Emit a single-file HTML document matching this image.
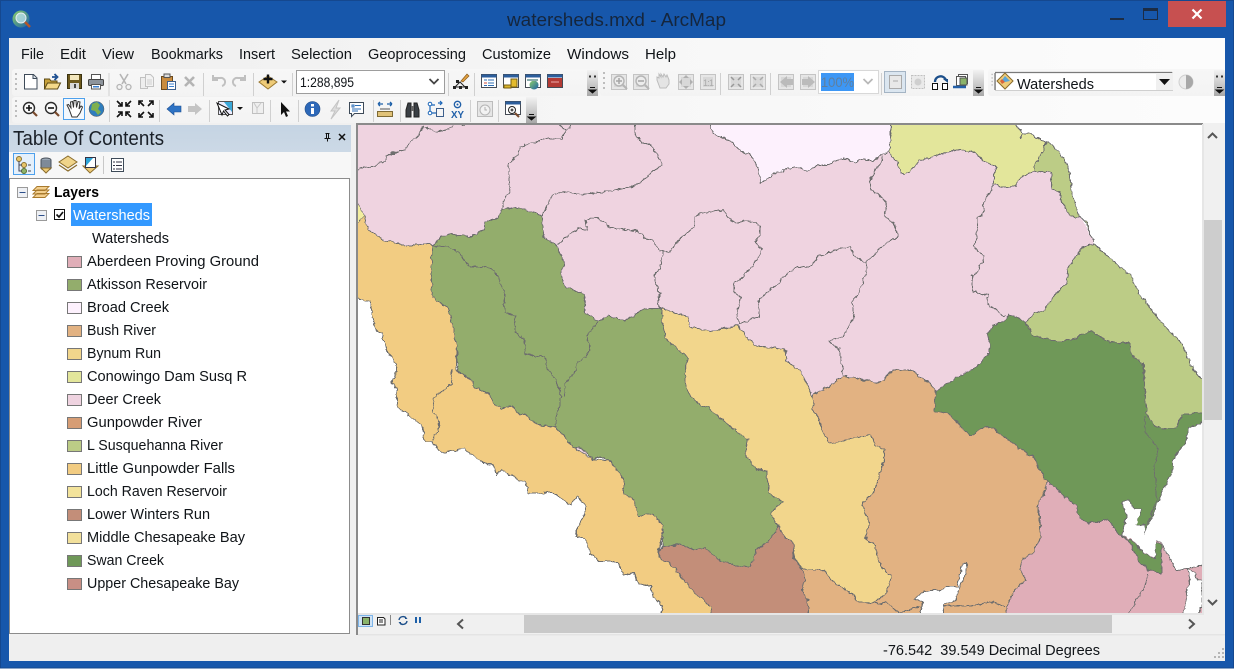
<!DOCTYPE html>
<html><head><meta charset="utf-8"><title>watersheds.mxd - ArcMap</title>
<style>
html,body{margin:0;padding:0;background:#fff;width:1234px;height:669px;overflow:hidden}
svg{display:block}
text{font-family:"Liberation Sans",sans-serif;fill:#101418}
.m{font-size:15px}
.l{font-size:14.5px}
.map polygon{stroke:#6e6e6e;stroke-width:3;stroke-linejoin:round}
.map polyline{stroke:#6e6e6e;stroke-width:3;fill:none;stroke-linejoin:round}
</style></head><body>
<svg width="1234" height="669" viewBox="0 0 1234 669" xmlns="http://www.w3.org/2000/svg">
<defs>
<linearGradient id="mb" x1="0" x2="1" y1="0" y2="0"><stop offset="0" stop-color="#eeeeee"/><stop offset=".6" stop-color="#f8f8f8"/><stop offset="1" stop-color="#fcfcfc"/></linearGradient>
<linearGradient id="tb" x1="0" x2="0" y1="0" y2="1"><stop offset="0" stop-color="#f7f7f7"/><stop offset="1" stop-color="#f3f3f3"/></linearGradient>
<linearGradient id="ch" x1="0" x2="0" y1="0" y2="1"><stop offset="0" stop-color="#f2f2f2"/><stop offset="1" stop-color="#a8a8a8"/></linearGradient>
<linearGradient id="gl" x1="0" x2="1" y1="0" y2="1"><stop offset="0" stop-color="#8ccf6a"/><stop offset="1" stop-color="#1a5fa8"/></linearGradient>
<linearGradient id="ti" x1="0" x2="0" y1="0" y2="1"><stop offset="0" stop-color="#c5d4e3"/><stop offset="1" stop-color="#ccd9e6"/></linearGradient>
<clipPath id="mc"><rect x="8" y="12" width="2533" height="1467"/></clipPath>
<filter id="rough" filterUnits="userSpaceOnUse" x="-40" y="-40" width="2700" height="1600" color-interpolation-filters="sRGB">
<feTurbulence type="fractalNoise" baseFrequency="0.06" numOctaves="2" seed="4" result="n"/>
<feDisplacementMap in="SourceGraphic" in2="n" scale="14" xChannelSelector="R" yChannelSelector="G"/>
</filter>
<symbol id="chev" width="11" height="26" viewBox="0 0 11 26"><rect width="11" height="26" fill="url(#ch)"/><path d="M3 17.500h5M2 20h7l-3.500 3z" stroke="#111" fill="#111" stroke-width="1"/></symbol>
<symbol id="grip" width="3" height="20" viewBox="0 0 3 20"><path d="M0 1h2v2H0zM0 6h2v2H0zM0 11h2v2H0zM0 16h2v2H0z" fill="#bdbdbd"/></symbol>
<symbol id="win" width="16" height="14" viewBox="0 0 16 14"><rect x=".5" y=".5" width="15" height="13" fill="#fff" stroke="#454b55"/><rect x=".5" y=".5" width="15" height="3" fill="#2c5e9c"/></symbol>
<symbol id="gi" width="16" height="16" viewBox="0 0 16 16"><rect x=".5" y=".5" width="15" height="15" fill="#e6e6e6" stroke="#c4c4c4"/><rect x="3" y="3" width="10" height="10" fill="#d8d8d8"/></symbol>
</defs>

<!-- window frame -->
<rect x="0" y="0" width="1234" height="668" fill="#1757ab"/>
<rect x=".5" y=".5" width="1233" height="667.500" fill="none" stroke="#15488f"/>
<rect x="9" y="38" width="1216" height="623" fill="#f0f0f0"/>

<!-- title bar -->
<circle cx="21" cy="19" r="8.500" fill="url(#gl)"/>
<circle cx="21" cy="18" r="5" fill="#bfe3ee" fill-opacity=".75" stroke="#e8eef0"/>
<path d="M25 22l5 5" stroke="#b4562a" stroke-width="2.500"/>
<text x="507" y="26" font-size="18" textLength="219" lengthAdjust="spacingAndGlyphs" style="fill:#15263d">watersheds.mxd - ArcMap</text>
<rect x="1110" y="18" width="14" height="2" fill="#1c2c44"/>
<rect x="1143.500" y="8.500" width="14" height="11" fill="none" stroke="#1c2c44"/><rect x="1143" y="8" width="15" height="3" fill="#1c2c44"/>
<rect x="1168" y="1" width="58" height="26" fill="#c75050"/>
<path d="M1192.500 9.500l9 9m0-9l-9 9" stroke="#fff" stroke-width="2.200"/>

<!-- menu bar -->
<rect x="9" y="38" width="1216" height="85" fill="url(#mb)"/>
<text class="m" x="21" y="59" textLength="23" lengthAdjust="spacingAndGlyphs">File</text>
<text class="m" x="60" y="59" textLength="26" lengthAdjust="spacingAndGlyphs">Edit</text>
<text class="m" x="102" y="59" textLength="32" lengthAdjust="spacingAndGlyphs">View</text>
<text class="m" x="151" y="59" textLength="72" lengthAdjust="spacingAndGlyphs">Bookmarks</text>
<text class="m" x="239" y="59" textLength="36" lengthAdjust="spacingAndGlyphs">Insert</text>
<text class="m" x="291" y="59" textLength="61" lengthAdjust="spacingAndGlyphs">Selection</text>
<text class="m" x="368" y="59" textLength="98" lengthAdjust="spacingAndGlyphs">Geoprocessing</text>
<text class="m" x="482" y="59" textLength="69" lengthAdjust="spacingAndGlyphs">Customize</text>
<text class="m" x="567" y="59" textLength="62" lengthAdjust="spacingAndGlyphs">Windows</text>
<text class="m" x="645" y="59" textLength="31" lengthAdjust="spacingAndGlyphs">Help</text>

<!-- toolbar strips -->
<rect x="12" y="69" width="585" height="27" rx="3" fill="url(#tb)"/>
<rect x="600" y="69" width="384" height="27" rx="3" fill="url(#tb)"/>
<rect x="988" y="69" width="237" height="27" rx="3" fill="url(#tb)"/>
<rect x="12" y="97" width="525" height="26" rx="3" fill="url(#tb)"/>
<use href="#grip" x="15" y="72"/><use href="#grip" x="15" y="99"/><use href="#grip" x="603" y="71"/><use href="#grip" x="991" y="73" height="14"/>

<!-- row 1 icons -->
<path d="M24.500 74.500h9l3.500 3.500v11h-12.500z" fill="#fff" stroke="#3d4a58"/><path d="M33 75v3.500h4" fill="#dfe6ee" stroke="#3d4a58"/>
<path d="M44.500 89v-10h5l1.500 2h6v8z" fill="#c8a23a" stroke="#5c4a16"/><path d="M44.500 89l3-6h13l-3 6z" fill="#f4d98a" stroke="#5c4a16"/><path d="M52 77h4m-1.500-3l3 3-3 3" stroke="#1d4f91" stroke-width="1.800" fill="none"/>
<rect x="67.500" y="74.500" width="14" height="14" fill="#6e5a1e" stroke="#3a3210"/><rect x="70" y="75" width="9" height="5" fill="#f3e7bd"/><rect x="70" y="83" width="9" height="6" fill="#d8d8d8"/><rect x="74" y="84" width="2" height="4" fill="#444"/>
<rect x="91.500" y="74.500" width="9" height="5" fill="#fff" stroke="#555"/><rect x="88.500" y="79.500" width="15" height="6" rx="1" fill="#8d949c" stroke="#444"/><rect x="91.500" y="84.500" width="9" height="4.500" fill="#fff" stroke="#555"/><rect x="93" y="86" width="6" height="1.500" fill="#3a7fd0"/>
<rect x="108.500" y="73" width="1" height="23" fill="#d0d0d0"/>
<path d="M120 74l6 10m2-10l-6 10" stroke="#b5b5b5" stroke-width="1.600"/><circle cx="119.500" cy="87" r="2.500" fill="none" stroke="#b5b5b5" stroke-width="1.300"/><circle cx="128.500" cy="87" r="2.500" fill="none" stroke="#b5b5b5" stroke-width="1.300"/>
<path d="M140.500 77.500h7v11h-7z" fill="#eee" stroke="#c2c2c2"/><path d="M145.500 74.500h5l3 3v9h-8z" fill="#f3f3f3" stroke="#c2c2c2"/><path d="M147 80h5m-5 2h5m-5 2h5" stroke="#cfcfcf"/>
<rect x="161.500" y="76.500" width="11" height="13" fill="#c98c3f" stroke="#6b4a1e"/><rect x="164" y="74" width="6" height="3.500" fill="#ddd" stroke="#555"/><rect x="167.500" y="81.500" width="8" height="8" fill="#fff" stroke="#3d5f8c"/><path d="M169 84h5m-5 2.500h5" stroke="#3a7fd0"/>
<path d="M185 77l9 9m0-9l-9 9" stroke="#b4b4b4" stroke-width="2.600"/>
<rect x="203" y="73" width="1" height="23" fill="#d0d0d0"/>
<path d="M214 78h6a4 4 0 0 1 2 8M213 75v5h5" fill="none" stroke="#c0c0c0" stroke-width="2"/>
<path d="M244 78h-6a4 4 0 0 0-2 8M245 75v5h-5" fill="none" stroke="#c0c0c0" stroke-width="2"/>
<rect x="253" y="73" width="1" height="23" fill="#d0d0d0"/>
<path d="M268 76l9 6-9 7-9-7z" fill="#eecb78" stroke="#9b7a32"/><path d="M268 74.500v9M263.500 79h9" stroke="#111" stroke-width="2.400"/>
<path d="M281 80.500h6l-3 3z" fill="#111"/>
<rect x="292" y="73" width="1" height="23" fill="#d0d0d0"/>
<rect x="296.500" y="70.500" width="148" height="23" fill="#fff" stroke="#9d9d9d"/>
<text x="300" y="87" font-size="14" textLength="54" lengthAdjust="spacingAndGlyphs">1:288,895</text>
<path d="M429.500 79l4.500 4.500 4.500-4.500" fill="none" stroke="#444" stroke-width="1.800"/>
<rect x="448" y="73" width="1" height="23" fill="#d0d0d0"/>
<path d="M455 87l5-5 5 5-10 0" fill="none" stroke="#222"/><rect x="453" y="86" width="3" height="3" fill="#222"/><rect x="459" y="86" width="3" height="3" fill="#222"/><rect x="465" y="86" width="3" height="3" fill="#222"/><rect x="456" y="80" width="3" height="3" fill="#222"/>
<path d="M461 81l6-7 2 2-6 6z" fill="#e0a040" stroke="#8a5a1c" stroke-width=".7"/>
<rect x="474" y="73" width="1" height="23" fill="#d0d0d0"/>
<use href="#win" x="481" y="74"/><path d="M484 80h3m1 0h6M484 83h3m1 0h6M484 85.500h3m1 0h6" stroke="#2f6fb5"/><path d="M484 83h3" stroke="#d04a3a"/>
<use href="#win" x="503" y="74"/><path d="M511 79h6v8h-6z" fill="#e3bb2e" stroke="#7a6010"/><path d="M504 85h7v3h-7z" fill="#d9b52c" stroke="#7a6010"/>
<use href="#win" x="525" y="74"/><circle cx="534" cy="85" r="4.500" fill="url(#gl)"/><rect x="527" y="79" width="11" height="2" fill="#8aa"/>
<use href="#win" x="547" y="74"/><rect x="548" y="78" width="14" height="9" fill="#b33a34"/><path d="M551 82h8" stroke="#eaa"/>
<use href="#chev" x="587" y="70"/><path d="M589 75.500h2v2h-2zM594 75.500h2v2h-2z" fill="#333"/>

<!-- grey toolbar -->
<use href="#gi" x="611" y="74"/><circle cx="619" cy="81" r="5" fill="#ececec" stroke="#b5b5b5" stroke-width="1.400"/><path d="M616 81h6M619 78v6" stroke="#a5a5a5" stroke-width="1.500"/><path d="M623 85l4 4" stroke="#b5b5b5" stroke-width="2"/>
<use href="#gi" x="633" y="74"/><circle cx="641" cy="81" r="5" fill="#ececec" stroke="#b5b5b5" stroke-width="1.400"/><path d="M638 81h6" stroke="#a5a5a5" stroke-width="1.500"/><path d="M645 85l4 4" stroke="#b5b5b5" stroke-width="2"/>
<path d="M657 80v-3l2 1v-4l2 3v-3l2 3 1-3 2 3 1-2 2 5v4l-3 4h-6z" fill="#e4e4e4" stroke="#bcbcbc"/>
<use href="#gi" x="678" y="74"/><path d="M686 75l-3 3h6zM686 89l-3-3h6zM679 82l3-3v6zM693 82l-3-3v6z" fill="#b0b0b0"/>
<use href="#gi" x="700" y="74"/><text x="703" y="86" font-size="9" textLength="11" style="fill:#aaa">1:1</text>
<rect x="720" y="73" width="1" height="22" fill="#d0d0d0"/>
<use href="#gi" x="728" y="74"/><path d="M731 77l3 3m7-3l-3 3m-7 7l3-3m7 3l-3-3" stroke="#999" stroke-width="1.500"/>
<use href="#gi" x="750" y="74"/><path d="M753 77l3 3m7-3l-3 3m-7 7l3-3m7 3l-3-3" stroke="#aaa" stroke-width="1.500"/>
<rect x="770" y="73" width="1" height="22" fill="#d0d0d0"/>
<use href="#gi" x="778" y="74"/><path d="M780 82l7-6v3h6v6h-6v3z" fill="#bbb"/>
<use href="#gi" x="800" y="74"/><path d="M815 82l-7-6v3h-6v6h6v3z" fill="#bbb"/>
<rect x="818.500" y="70.500" width="60" height="23" fill="#fff" stroke="#d8d8d8"/>
<rect x="821" y="73" width="33" height="18" fill="#3d97f5"/>
<text x="821" y="87" font-size="14" textLength="33" lengthAdjust="spacingAndGlyphs" style="fill:#5f7f9f">100%</text>
<path d="M863.500 79l4.500 4.500 4.500-4.500" fill="none" stroke="#b8b8b8" stroke-width="1.800"/>
<rect x="881" y="73" width="1" height="22" fill="#d0d0d0"/>
<rect x="884.500" y="71.500" width="21" height="21" fill="#dbe6f0" stroke="#a4b4c4"/>
<rect x="889.500" y="75.500" width="12" height="13" fill="#e8e8e8" stroke="#aaa"/><path d="M893 81h5" stroke="#aaa"/>
<rect x="911.500" y="75.500" width="13" height="13" fill="#eaeaea" stroke="#c0c0c0" stroke-dasharray="2 1"/><circle cx="918" cy="82" r="3.500" fill="#cfcfcf"/>
<rect x="932.500" y="83.500" width="5" height="6" fill="#fff" stroke="#111"/><rect x="942.500" y="83.500" width="5" height="6" fill="#fff" stroke="#111"/><path d="M935 82c0-6 8-8 11-2" fill="none" stroke="#1c4f8a" stroke-width="2.400"/><path d="M943 79h5v4z" fill="#1c4f8a"/>
<rect x="958.500" y="74.500" width="9" height="9" fill="#fff" stroke="#555"/><rect x="956.500" y="76.500" width="9" height="9" fill="#fff" stroke="#555"/><rect x="960" y="78" width="7" height="7" fill="#8ab36a" stroke="#555"/><path d="M953 87h13" stroke="#2460a8" stroke-width="2.500"/>
<use href="#chev" x="973" y="70"/>

<!-- layer combo -->
<rect x="995.500" y="72.500" width="177" height="18" fill="#fff" stroke="#cfcfcf"/><path d="M995 73v17M995 72.500h177" stroke="#7a7a7a" stroke-width="1.300"/>
<rect x="1156" y="73" width="17" height="17" fill="#f0f0f0"/><path d="M1159 79h11l-5.500 6z" fill="#111"/>
<path d="M1005 73l8 8-8 8-8-8z" fill="#eecb78" stroke="#8a6c2c"/><path d="M1005 76l5 5-5 1-3-2z" fill="#58a6da"/><path d="M1002 79l3 3-3 2-2-3z" fill="#d8643c"/>
<text x="1017" y="89" font-size="15" textLength="77" lengthAdjust="spacingAndGlyphs">Watersheds</text>
<circle cx="1186" cy="82" r="7" fill="#ececec" stroke="#cfcfcf"/><path d="M1186 75a7 7 0 0 1 0 14z" fill="#a8a8a8"/>
<use href="#chev" x="1214" y="70"/><path d="M1216 75.500h2v2h-2zM1221 75.500h2v2h-2z" fill="#333"/>

<!-- row 2 icons -->
<circle cx="29" cy="108" r="5.500" fill="#fafafa" stroke="#2b2b2b" stroke-width="1.400"/><path d="M26 108h6M29 105v6" stroke="#111" stroke-width="1.600"/><path d="M33 112l4 4" stroke="#7a4a2c" stroke-width="2.200"/>
<circle cx="51" cy="108" r="5.500" fill="#fafafa" stroke="#2b2b2b" stroke-width="1.400"/><path d="M48 108h6" stroke="#111" stroke-width="1.600"/><path d="M55 112l4 4" stroke="#7a4a2c" stroke-width="2.200"/>
<rect x="63.500" y="98.500" width="21" height="21" fill="#f3f8fd" stroke="#4da0ec"/>
<path d="M69 109l-2-4 1.500-.5 2.500 3.500-.5-6 2-.5 1 6 .5-7 2 0 .5 7 1.500-6 2 .5-1 7 2-3 1.500 1-2.500 6-3 4h-5z" fill="#fff" stroke="#333" stroke-width="1"/>
<circle cx="96.500" cy="109" r="7.500" fill="#2f7dbd"/><path d="M92 104l5-2 3 3-2 4 3 3-3 3-3-4-4-1z" fill="#7fb04f"/><circle cx="96.500" cy="109" r="7.500" fill="none" stroke="#555" stroke-width=".5"/>
<rect x="109" y="100" width="1" height="22" fill="#d0d0d0"/>
<path d="M117 101l5 5m0-4v4h-4M131 101l-5 5m0-4v4h4M117 117l5-5m0 4v-4h-4M131 117l-5-5m0 4v-4h4" stroke="#111" stroke-width="1.600" fill="none"/>
<path d="M144 106l-5-5m0 4v-4h4M148 106l5-5m0 4v-4h-4M144 112l-5 5m0-4v4h4M148 112l5 5m0-4v4h-4" stroke="#111" stroke-width="1.600" fill="none"/>
<rect x="159" y="100" width="1" height="22" fill="#d0d0d0"/>
<path d="M167 109l7-6v3h7v6h-7v3z" fill="#2e73c4" stroke="#1d4f91" stroke-width=".6"/>
<path d="M202 109l-7-6v3h-7v6h7v3z" fill="#c4c4c4"/>
<rect x="209" y="100" width="1" height="22" fill="#d0d0d0"/>
<rect x="218.500" y="101.500" width="14" height="13" fill="#eef" stroke="#555"/><path d="M224 102h8v10z" fill="#3aa8d8"/><path d="M217 103l5 12 1.500-4 4 5 1.500-1.500-4-4.500 4-1z" fill="#fff" stroke="#111"/>
<path d="M237 107h6l-3 3z" fill="#111"/>
<rect x="252.500" y="102.500" width="11" height="11" fill="#efefef" stroke="#c0c0c0"/><path d="M254 103l3 5 4-5M257 108v5" stroke="#c8c8c8" fill="none"/>
<rect x="270" y="100" width="1" height="22" fill="#d0d0d0"/>
<path d="M281 102l0 13 3-3 2 5 2-1-2-4.500h4z" fill="#111"/>
<rect x="298" y="100" width="1" height="22" fill="#d0d0d0"/>
<circle cx="312.500" cy="109" r="7.500" fill="#2d68b8" stroke="#204c88" stroke-width=".6"/><rect x="311" y="108" width="3" height="6" fill="#fff"/><rect x="311" y="104" width="3" height="2.500" fill="#fff"/>
<path d="M339 100l-8 11h4l-4 8 9-11h-4z" fill="#ddd" stroke="#c4c4c4"/>
<path d="M349.500 102.500h14v11h-9l-3 3v-3h-2z" fill="#fff" stroke="#3d4a58"/><path d="M352 105h2v2h-2zM355 105.500h6M352 109h9M352 111h6" stroke="#2c6db5" fill="none"/>
<rect x="373" y="100" width="1" height="22" fill="#d0d0d0"/>
<rect x="377.500" y="111.500" width="15" height="5" fill="#e0c278" stroke="#7e6a34"/><path d="M378 104h5m-5 0l2-2m-2 2l2 2M392 104h-5m5 0l-2-2m2 2l-2 2" stroke="#1c5fa8" stroke-width="1.300" fill="none"/><path d="M380 109h10" stroke="#555"/>
<rect x="400" y="100" width="1" height="22" fill="#d0d0d0"/>
<path d="M406 117v-7l2-7h3v14zM414 117v-14h3l2 7v7z" fill="#3a3f44" stroke="#222"/><rect x="411" y="106" width="3" height="5" fill="#666"/>
<rect x="436.500" y="108.500" width="7" height="8" fill="#f5f5f5" stroke="#3d5f8c"/><path d="M430 103v10h6M430 105h5M438 103h4m-2-2l2 2-2 2" stroke="#1c66b8" fill="none" stroke-width="1.200"/><circle cx="430" cy="104" r="1.800" fill="#fff" stroke="#1c66b8"/><circle cx="430" cy="113" r="1.800" fill="#fff" stroke="#1c66b8"/>
<circle cx="457.500" cy="104.500" r="3.200" fill="none" stroke="#1f5fa8" stroke-width="1.300"/><circle cx="457.500" cy="104.500" r="1" fill="#1f5fa8"/>
<text x="451" y="118" font-size="10" font-weight="bold" textLength="13" lengthAdjust="spacingAndGlyphs" style="fill:#1f5fa8">XY</text>
<rect x="470" y="100" width="1" height="22" fill="#d0d0d0"/>
<rect x="477.500" y="101.500" width="15" height="15" fill="#e6e6e6" stroke="#bcbcbc"/><circle cx="485" cy="110" r="5" fill="#f2f2f2" stroke="#b5b5b5"/><path d="M485 107v3h2" stroke="#b0b0b0" fill="none"/>
<rect x="498" y="100" width="1" height="22" fill="#d0d0d0"/>
<use href="#win" x="505" y="101"/><circle cx="512" cy="110" r="3.500" fill="#fff" stroke="#222"/><path d="M510.500 110h3M512 108.500v3" stroke="#111"/><path d="M515 113l4 4" stroke="#7a4a2c" stroke-width="2"/>
<use href="#chev" x="526" y="97"/>

<!-- TOC -->
<rect x="9" y="125" width="342" height="27" fill="url(#ti)"/>
<text x="13" y="145" font-size="20" textLength="151" lengthAdjust="spacingAndGlyphs" style="fill:#1a2028">Table Of Contents</text>
<path d="M325.500 133.500h4M326.500 133.500v5h2v-5M324.500 138.500h6M327.500 138.500v3" stroke="#111" fill="none"/>
<path d="M339 134l6 6m0-6l-6 6" stroke="#111" stroke-width="1.500"/>
<rect x="9" y="152" width="342" height="26" fill="#f7f7f7"/>
<rect x="13.500" y="153.500" width="21" height="21" fill="#e4f0fb" stroke="#4da0ec"/>
<circle cx="19" cy="159" r="2.500" fill="#e8c66a" stroke="#8a7030"/><circle cx="24" cy="165" r="2.500" fill="#e8c66a" stroke="#8a7030"/><circle cx="24" cy="171" r="2.500" fill="#8fb36a" stroke="#557030"/><path d="M19 161v4h3M19 165v6h3M28 165h3M28 171h3" stroke="#445" fill="none"/>
<ellipse cx="46" cy="160" rx="5" ry="2" fill="#9aa7b5" stroke="#4a525c"/><path d="M41 160v8c0 2.500 10 2.500 10 0v-8" fill="#7e8a98" stroke="#4a525c"/><path d="M41 168h10l-5 5z" fill="#eecb78" stroke="#8a6c2c"/>
<path d="M68 156l9 6-9 6-9-6z" fill="#f0d48a" stroke="#8a6c2c"/><path d="M59 165l9 6 9-6" fill="none" stroke="#8a6c2c" stroke-width="1.200"/>
<path d="M89 166h-6l7 7 8-7h-6z" fill="#eecb78" stroke="#8a6c2c"/><rect x="85.500" y="157.500" width="10" height="10" fill="#fff" stroke="#334"/><path d="M86 158h7l-7 8z" fill="#2ca4d8"/>
<rect x="103" y="156" width="1" height="18" fill="#c8c8c8"/>
<rect x="111.500" y="158.500" width="12" height="13" fill="#fff" stroke="#3d4a58"/><path d="M113 162h2v0M116 162h6M113 165.500h2M116 165.500h6M113 169h2M116 169h6" stroke="#334"/>
<rect x="9.500" y="178.500" width="340" height="455" fill="#fff" stroke="#8c8c8c"/>

<!-- tree -->
<rect x="17.500" y="187.500" width="10" height="10" fill="#eef0f4" stroke="#9a9a9a"/><path d="M19.500 192.500h6" stroke="#2d4f8a"/>
<path d="M33 197.500l4-4h12l-4 4zM33 194l4-4h12l-4 4zM33 190.500l4-4h12l-4 4z" fill="#f3cf8e" stroke="#a87a2e" stroke-width=".9"/>
<text x="54" y="197" font-size="14.500" font-weight="bold" textLength="45" lengthAdjust="spacingAndGlyphs" style="fill:#000">Layers</text>
<rect x="36.500" y="210.500" width="10" height="10" fill="#eef0f4" stroke="#9a9a9a"/><path d="M38.500 215.500h6" stroke="#2d4f8a"/>
<rect x="54.500" y="209.500" width="10" height="10" fill="#fff" stroke="#111"/><path d="M56.500 214.500l2.500 2.500 4-5" fill="none" stroke="#111" stroke-width="1.700"/>
<rect x="71" y="203" width="81" height="23" fill="#3399ff"/>
<text class="l" x="73" y="220" textLength="77" lengthAdjust="spacingAndGlyphs" style="fill:#fff">Watersheds</text>
<text class="l" x="92" y="243" textLength="77" lengthAdjust="spacingAndGlyphs">Watersheds</text>

<rect x="67.500" y="256.500" width="14" height="11" fill="#e0aeb8" stroke="#777"/><text class="l" x="87" y="266" textLength="172" lengthAdjust="spacingAndGlyphs">Aberdeen Proving Ground</text>
<rect x="67.500" y="279.500" width="14" height="11" fill="#93ad6c" stroke="#777"/><text class="l" x="87" y="289" textLength="120" lengthAdjust="spacingAndGlyphs">Atkisson Reservoir</text>
<rect x="67.500" y="302.500" width="14" height="11" fill="#fdf1fd" stroke="#777"/><text class="l" x="87" y="312" textLength="82" lengthAdjust="spacingAndGlyphs">Broad Creek</text>
<rect x="67.500" y="325.500" width="14" height="11" fill="#e2b282" stroke="#777"/><text class="l" x="87" y="335" textLength="69" lengthAdjust="spacingAndGlyphs">Bush River</text>
<rect x="67.500" y="348.500" width="14" height="11" fill="#f2d68c" stroke="#777"/><text class="l" x="87" y="358" textLength="74" lengthAdjust="spacingAndGlyphs">Bynum Run</text>
<rect x="67.500" y="371.500" width="14" height="11" fill="#e3e69b" stroke="#777"/><text class="l" x="87" y="381" textLength="160" lengthAdjust="spacingAndGlyphs">Conowingo Dam Susq R</text>
<rect x="67.500" y="394.500" width="14" height="11" fill="#efd3e0" stroke="#777"/><text class="l" x="87" y="404" textLength="74" lengthAdjust="spacingAndGlyphs">Deer Creek</text>
<rect x="67.500" y="417.500" width="14" height="11" fill="#d69d75" stroke="#777"/><text class="l" x="87" y="427" textLength="115" lengthAdjust="spacingAndGlyphs">Gunpowder River</text>
<rect x="67.500" y="440.500" width="14" height="11" fill="#bccc86" stroke="#777"/><text class="l" x="87" y="450" textLength="136" lengthAdjust="spacingAndGlyphs">L Susquehanna River</text>
<rect x="67.500" y="463.500" width="14" height="11" fill="#f2cc82" stroke="#777"/><text class="l" x="87" y="473" textLength="148" lengthAdjust="spacingAndGlyphs">Little Gunpowder Falls</text>
<rect x="67.500" y="486.500" width="14" height="11" fill="#f3e39b" stroke="#777"/><text class="l" x="87" y="496" textLength="140" lengthAdjust="spacingAndGlyphs">Loch Raven Reservoir</text>
<rect x="67.500" y="509.500" width="14" height="11" fill="#c38e79" stroke="#777"/><text class="l" x="87" y="519" textLength="123" lengthAdjust="spacingAndGlyphs">Lower Winters Run</text>
<rect x="67.500" y="532.500" width="14" height="11" fill="#f2e09b" stroke="#777"/><text class="l" x="87" y="542" textLength="158" lengthAdjust="spacingAndGlyphs">Middle Chesapeake Bay</text>
<rect x="67.500" y="555.500" width="14" height="11" fill="#6f9858" stroke="#777"/><text class="l" x="87" y="565" textLength="77" lengthAdjust="spacingAndGlyphs">Swan Creek</text>
<rect x="67.500" y="578.500" width="14" height="11" fill="#c88f85" stroke="#777"/><text class="l" x="87" y="588" textLength="152" lengthAdjust="spacingAndGlyphs">Upper Chesapeake Bay</text>

<!-- map frame -->
<rect x="356" y="123" width="847" height="491" fill="#fff"/>
<g class="map" transform="translate(355,120) scale(.33333)" clip-path="url(#mc)">
<g filter="url(#rough)" shape-rendering="crispEdges">
<polygon style="stroke:none" fill="#efd3e0" points="-30,-30 1975,-30 1975,100 2070,120 2105,200 2174,288 2218,370 2100,1000 600,1000 250,500 -30,500"/>
<!-- broad creek -->
<polygon fill="#fdf1fd" points="1065,-30 1065,12 1075,40 1110,55 1135,68 1160,98 1185,100 1205,135 1218,190 1260,160 1290,148 1320,138 1355,155 1390,135 1415,135 1440,125 1475,115 1502,130 1515,118 1560,120 1602,92 1607,85 1607,-30"/>
<!-- conowingo -->
<polygon fill="#e3e69b" points="1607,-30 1607,85 1602,92 1645,162 1670,150 1695,122 1745,105 1810,88 1860,98 1890,125 1925,140 1915,165 1915,192 1940,202 1982,200 2000,170 2042,155 2042,130 2062,100 2070,65 2025,40 2005,40 1995,55 2005,40 1980,12 1975,-30"/>
<!-- upper susq strip -->
<polygon fill="#bccc86" points="2075,62 2062,100 2042,130 2042,155 2087,158 2090,205 2115,215 2120,245 2145,288 2175,290 2195,305 2215,365 2190,305 2170,285 2150,210 2140,140 2110,95"/>
<!-- lower susq -->
<polygon fill="#bccc86" points="2220,370 2185,380 2158,415 2138,450 2135,490 2090,535 2070,570 2040,578 2013,607 2030,645 2115,665 2160,655 2208,632 2265,668 2320,668 2330,710 2365,730 2368,750 2368,800 2375,880 2395,915 2420,928 2465,925 2480,885 2560,875 2560,800 2515,750 2480,670 2420,610 2350,515 2325,465 2255,405"/>
<!-- rose -->
<polygon fill="#e0aeb8" points="2080,1085 2065,1120 2048,1160 2058,1250 2035,1300 2000,1320 1995,1350 2012,1380 1975,1415 1955,1460 1955,1500 2560,1500 2560,1335 2515,1338 2495,1345 2465,1352 2450,1325 2415,1265 2300,1200 2170,1150"/>
<polygon fill="#ffffff" points="2495,1345 2505,1370 2495,1420 2485,1490 2530,1490 2536,1465 2541,1460 2541,1385 2525,1372 2510,1350"/>
<polyline points="2380,1360 2370,1400 2320,1478"/>
<!-- orange -->
<polygon fill="#e2b282" points="1290,1253 1375,822 1420,800 1465,768 1520,780 1575,788 1615,750 1665,750 1720,785 1742,812 1737,872 1780,880 1845,948 1890,920 1915,925 2000,990 2040,1015 2055,1055 2080,1085 2065,1120 2048,1160 2058,1250 2035,1300 2000,1320 1995,1350 2012,1380 1975,1415 1955,1460 1955,1500 1360,1500 1358,1440 1338,1410 1352,1380 1340,1345 1315,1320"/>
<polyline points="1555,1450 1595,1448 1630,1478"/>
<polyline points="1630,1478 1695,1460"/>
<polyline points="1765,1460 1850,1458 1910,1445 1950,1460"/>
<polygon fill="#ffffff" points="1680,1435 1705,1415 1755,1412 1780,1400 1810,1400 1810,1370 1825,1330 1835,1328 1833,1360 1815,1400 1800,1440 1765,1455 1765,1500 1695,1500 1702,1445"/>
<!-- yellow -->
<polygon fill="#f2d68c" points="918,565 1000,590 1005,620 1050,630 1065,635 1150,615 1175,650 1200,678 1290,688 1295,725 1335,750 1370,825 1375,850 1370,865 1390,890 1405,940 1425,972 1490,955 1545,945 1565,975 1588,990 1585,1025 1560,1110 1522,1150 1530,1180 1545,1208 1530,1250 1558,1275 1578,1340 1610,1370 1595,1420 1555,1450 1510,1445 1495,1425 1430,1380 1410,1352 1345,1347 1315,1315 1317,1272 1290,1253 1270,1220 1245,1180 1283,1145 1240,1120 1235,1055 1200,1045 1170,1000 1180,960 1140,930 1060,865 1020,845 992,805 992,750 1000,715 930,655"/>
<!-- brown -->
<polygon fill="#c38e79" points="1270,1220 1290,1253 1317,1272 1315,1315 1340,1345 1352,1380 1338,1410 1358,1440 1360,1500 1070,1500 1070,1460 1020,1420 960,1345 910,1310 920,1280 975,1273 1020,1290 1050,1283 1095,1320 1150,1340 1185,1340 1205,1290 1240,1265"/>
<!-- little gunpowder -->
<polygon fill="#f2cc82" points="-30,250 8,250 28,290 40,330 85,360 165,378 225,370 232,378 228,450 232,530 280,565 295,630 305,680 305,750 350,780 405,820 415,850 470,860 510,880 560,918 600,920 655,980 715,1020 760,1020 805,1075 805,1125 830,1130 850,1190 890,1180 920,1180 925,1215 915,1280 910,1310 960,1345 1020,1420 1070,1460 1070,1500 920,1500 920,1455 895,1430 890,1400 850,1390 835,1360 805,1365 790,1325 750,1322 735,1325 705,1300 690,1255 665,1250 665,1225 690,1180 690,1155 668,1128 645,1155 590,1115 555,1120 520,1120 515,1090 465,1065 440,1050 425,1065 415,1035 385,1030 325,985 260,1000 240,975 230,965 210,965 200,915 155,880 125,860 125,805 110,790 125,750 125,735 100,700 80,640 60,630 45,545 8,535 -30,535"/>
<polygon fill="#f3ee9f" style="stroke-width:2" points="-30,250 10,252 27,286 10,305 -30,305"/>
<polyline points="288,750 290,790 235,835 235,875 252,905 250,935 230,962"/>
<!-- atkisson -->
<polygon fill="#93ad6c" points="232,378 260,350 285,342 350,350 385,330 390,305 430,295 440,268 490,263 560,287 565,350 605,378 628,430 618,460 628,500 690,525 688,575 728,605 760,587 810,602 870,565 918,565 930,655 1000,715 992,750 992,805 1020,845 1060,865 1140,930 1180,960 1170,1000 1200,1045 1235,1055 1240,1120 1283,1145 1245,1180 1270,1220 1240,1265 1205,1290 1185,1340 1150,1340 1095,1320 1050,1283 1020,1290 975,1273 920,1280 925,1215 890,1180 850,1190 830,1130 805,1125 805,1075 760,1020 735,1010 715,1020 680,985 655,980 600,920 560,918 525,900 510,880 495,885 470,860 440,865 415,850 405,820 360,805 350,780 310,750 305,680 295,630 280,565 245,540 232,530 228,450"/>
<polyline points="232,378 280,380 310,395 340,440 410,445 430,470 448,520 450,575 480,590 480,635 510,660 510,700 540,710 570,710 580,750 610,790 618,830 610,880 600,915"/>
<polyline points="728,605 695,650 705,680 695,710 665,725 665,750 630,790 625,830"/>
<!-- pink lines -->
<polyline points="8,148 45,143 90,125 95,105 150,90 160,70 190,50 205,18 245,35 280,30 295,12 330,15"/>
<polyline points="610,12 635,30 620,55 580,55 495,80 490,105 460,130 462,190 465,215 450,235 440,268"/>
<polyline points="635,30 648,12"/>
<polyline points="560,285 595,225 625,215 680,225 780,210 840,198 900,150 922,135 890,75 860,70 838,40 838,12"/>
<polyline points="608,378 640,345 675,325 698,330 695,300 720,292 755,310 765,322 850,335 865,350 890,358 915,395 945,395 975,355 1020,320 1018,295 1035,280 1105,270 1118,295 1150,310 1175,298 1215,318 1215,345 1200,365 1222,390 1190,440 1165,470 1135,492 1135,515 1157,532 1145,580 1152,612"/>
<polyline points="925,395 915,445 895,470 915,520 910,550 918,565"/>
<polyline points="1152,612 1212,590 1212,540 1290,468 1325,440 1370,438 1390,408 1465,385 1485,378 1498,405 1535,430 1535,460 1510,520 1490,545 1498,590 1465,650 1425,663 1455,690 1462,745 1462,765"/>
<polyline points="1585,110 1560,150 1545,185 1545,210 1575,225 1595,255 1590,285 1615,310 1628,348 1585,375 1540,420 1535,430"/>
<polyline points="1915,195 1885,250 1888,275 1868,295 1865,360 1855,375 1888,410 1870,455 1850,465 1855,515 1898,525 1898,550 1950,590"/>
<!-- swan creek -->
<polygon fill="#6f9858" points="1962,585 2013,607 2030,645 2115,665 2160,655 2208,632 2265,668 2320,668 2330,710 2365,730 2368,800 2375,880 2395,915 2420,928 2465,925 2480,885 2560,875 2560,900 2500,925 2495,960 2455,1015 2450,1060 2420,1120 2400,1170 2365,1245 2370,1215 2340,1215 2360,1170 2330,1160 2320,1140 2300,1150 2315,1180 2310,1210 2300,1250 2330,1260 2365,1300 2400,1315 2405,1265 2420,1280 2418,1362 2380,1350 2350,1320 2320,1260 2290,1240 2255,1198 2200,1212 2175,1195 2165,1160 2080,1085 2055,1055 2040,1015 2000,990 1915,925 1890,920 1845,948 1780,880 1737,872 1742,812 1845,750 1855,748 1900,705 1905,680 1898,640 1915,615 1950,605"/>
<polyline points="2370,890 2372,940 2410,985 2395,1060 2405,1085 2405,1145 2375,1215"/>
<!-- bay white patch -->
<polygon fill="#ffffff" style="stroke:none" points="2305,1152 2322,1145 2332,1165 2358,1172 2342,1216 2368,1216 2368,1245 2400,1180 2405,1262 2400,1312 2365,1298 2332,1258 2302,1248 2312,1210 2317,1180"/>
</g>
</g>
<rect x="356" y="123" width="847" height="2" fill="#8a8a8a"/>
<rect x="356" y="123" width="2" height="512" fill="#8a8a8a"/>
<rect x="358" y="613" width="845" height="2" fill="#e6e6e6"/>
<rect x="1202" y="124" width="2" height="491" fill="#e6e6e6"/>

<!-- scrollbars -->
<rect x="1204" y="125" width="19" height="490" fill="#f0f0f0"/>
<rect x="1204" y="220" width="18" height="200" fill="#cdcdcd"/>
<path d="M1208 138l4.500-4.500 4.500 4.500" fill="none" stroke="#555" stroke-width="2"/>
<path d="M1208 600l4.500 4.500 4.500-4.500" fill="none" stroke="#555" stroke-width="2"/>
<rect x="358" y="615" width="866" height="19" fill="#f0f0f0"/>
<rect x="524" y="615" width="588" height="18" fill="#c9c9c9"/>
<path d="M463 619.500l-5 4.500 5 4.500" fill="none" stroke="#555" stroke-width="2"/>
<path d="M1189 619.500l5 4.500-5 4.500" fill="none" stroke="#555" stroke-width="2"/>
<rect x="358" y="634" width="867" height="1.500" fill="#e4e4e4"/>
<rect x="358.500" y="615.500" width="14" height="11" fill="#cfe3f6" stroke="#7db4e8"/>
<rect x="362.500" y="617.500" width="7" height="7" fill="#8ab36a" stroke="#333"/>
<path d="M377.500 617.500h6l1.500 1.500v6h-7.500z" fill="#fff" stroke="#222"/><path d="M379 620h4M379 622h4" stroke="#222"/>
<rect x="390" y="615" width="1" height="10" fill="#888"/>
<path d="M399 620a4 4 0 0 1 7-2M407 621a4 4 0 0 1-7 2" fill="none" stroke="#1c4f8a" stroke-width="1.400"/><path d="M405 616v3h2.500zM401 625v-3h-2.500z" fill="#1c4f8a"/>
<rect x="415" y="617" width="2" height="6" fill="#1c5fa8"/><rect x="419" y="617" width="2" height="6" fill="#1c5fa8"/>

<!-- status bar -->
<rect x="9" y="636" width="1216" height="25" fill="#efefef"/>
<text x="883" y="655" font-size="14.500" textLength="217" lengthAdjust="spacingAndGlyphs" xml:space="preserve">-76.542  39.549 Decimal Degrees</text>
<path d="M1222 648h2v2h-2zM1218 652h2v2h-2zM1222 652h2v2h-2zM1214 656h2v2h-2zM1218 656h2v2h-2zM1222 656h2v2h-2z" fill="#b5b5b5"/>
</svg>
</body></html>
